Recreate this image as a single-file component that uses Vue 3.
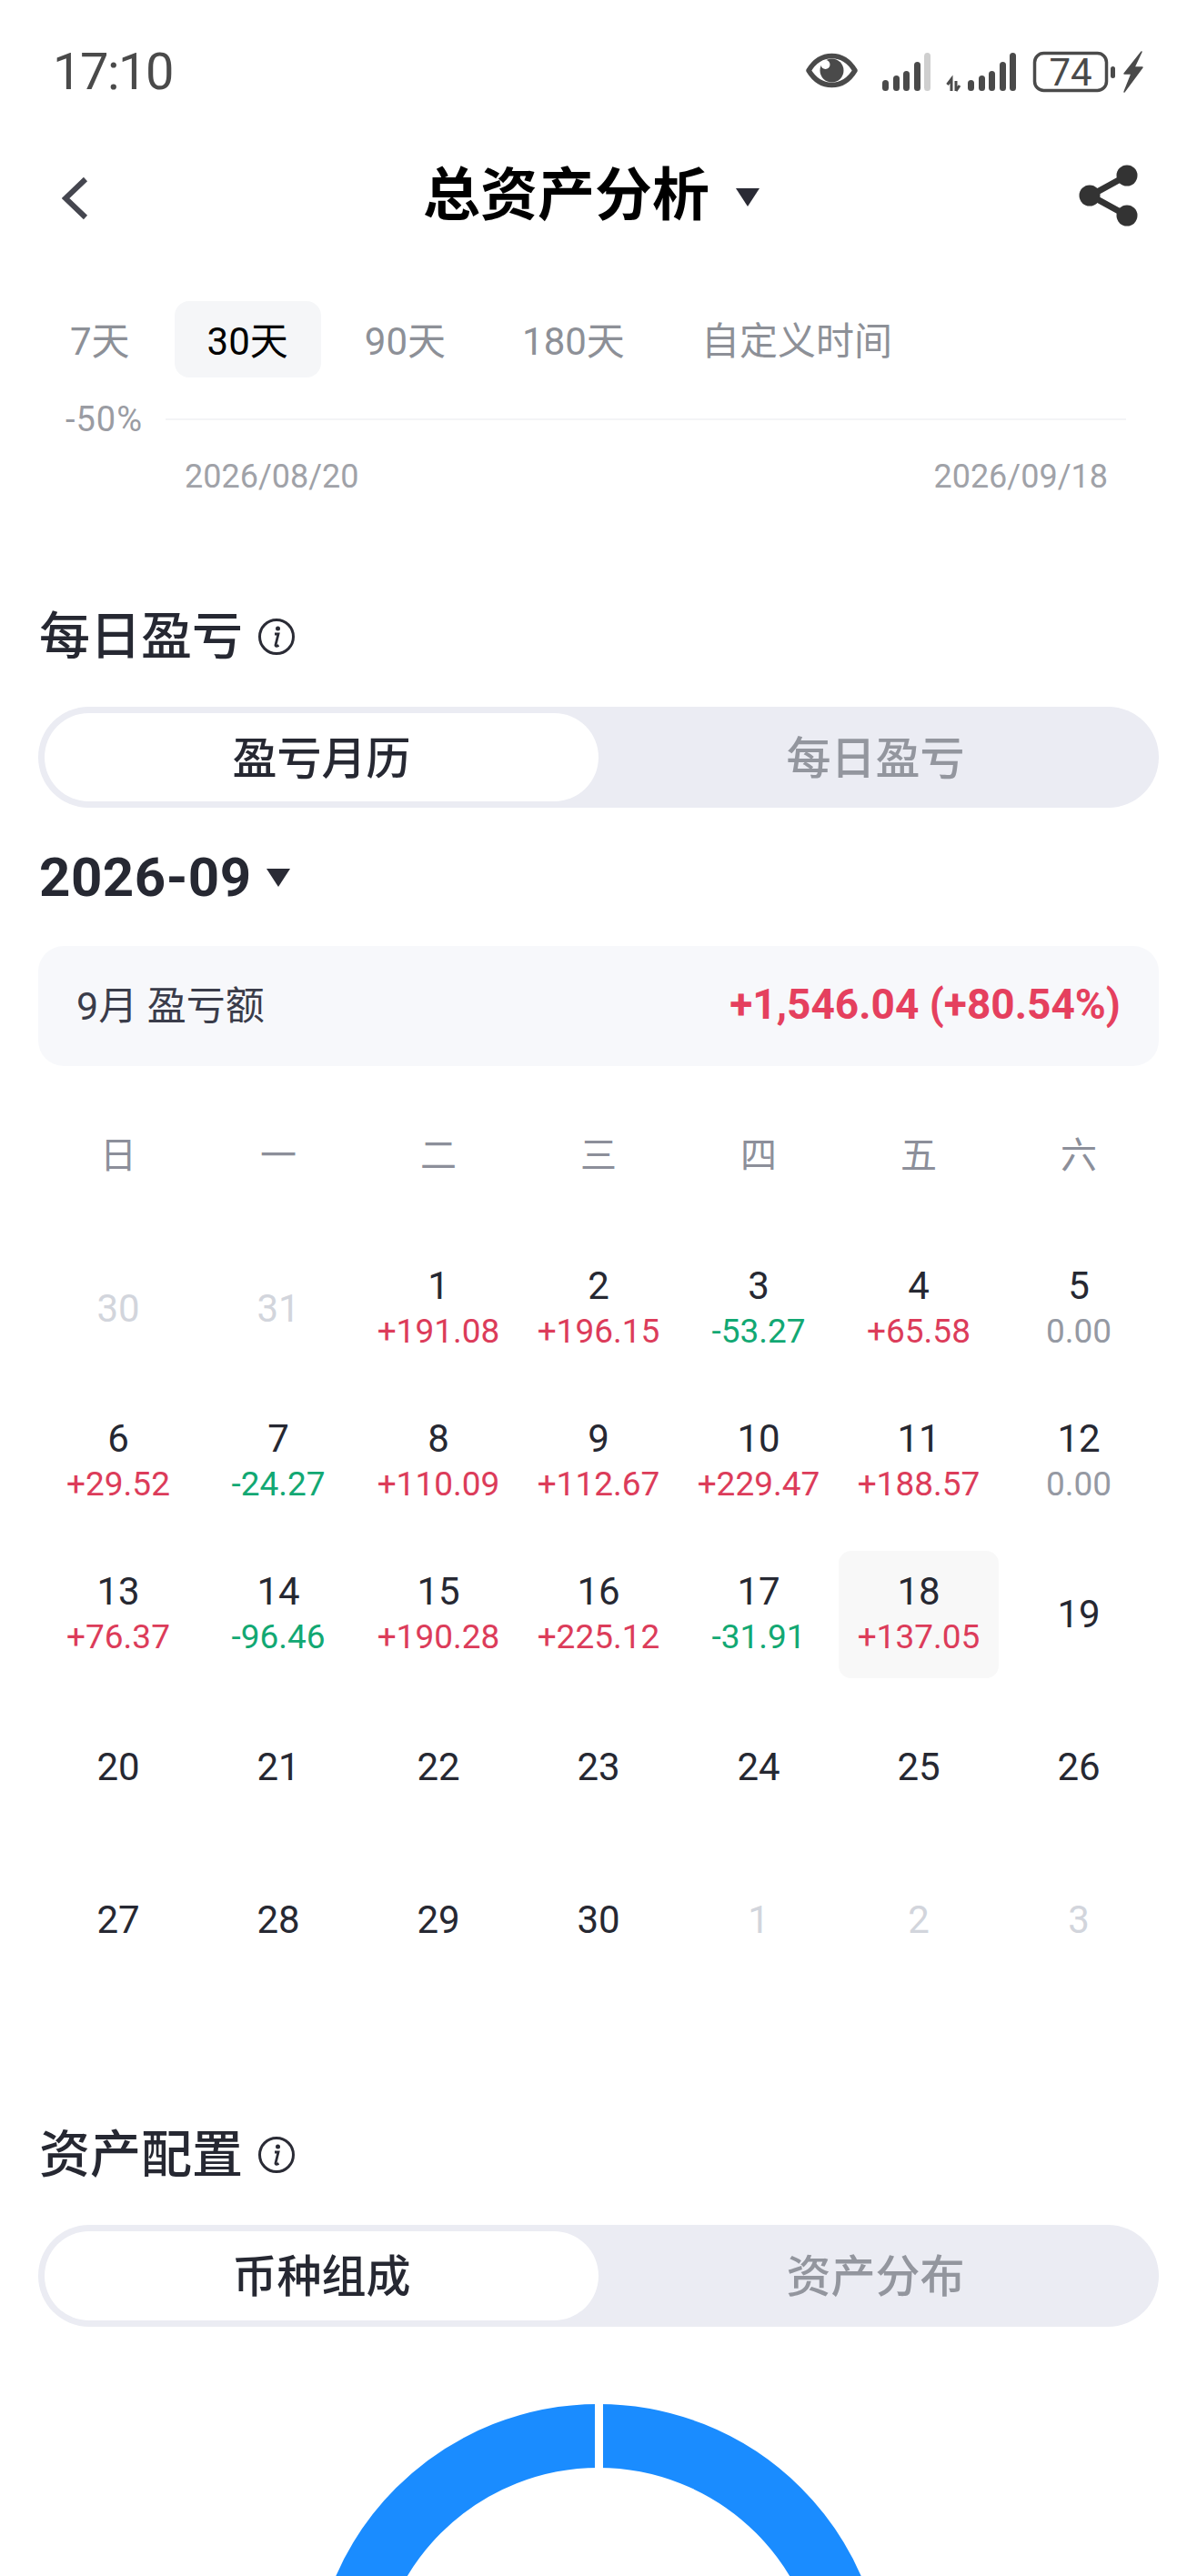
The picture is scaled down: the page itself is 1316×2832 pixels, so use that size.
<template>
  <div class="page">
    <div class="status">
      <span class="time">17:10</span>
      <svg class="status-icons" width="372" height="64" viewBox="0 -9 372 64">
        <path d="M3 21.5C10 10 19 5.5 28.5 5.5S47 10 54 21.5C47 33 38 37.5 28.5 37.5S10 33 3 21.5Z" fill="none" stroke="#4a4a4a" stroke-width="5.5" stroke-linejoin="round" />
        <circle cx="28.5" cy="21.5" r="13" fill="#4a4a4a" />
        <circle cx="21.5" cy="15" r="5" fill="#fff" />
        <rect v-for="b in signalOne" :key="b.x" :x="b.x" :y="44 - b.h" width="7" :height="b.h" rx="3.5" :fill="b.light ? '#cfcfcf' : '#4a4a4a'" />
        <path d="M160 44V31l-4.5 6M165 44V33M165 44l4-6" fill="none" stroke="#4a4a4a" stroke-width="3" />
        <rect v-for="x in signalTwo" :key="x.x" :x="x.x" :y="44 - x.h" width="7" :height="x.h" rx="3.5" fill="#4a4a4a" />
        <rect x="251.5" y="2.5" width="79" height="41" rx="10" fill="none" stroke="#4a4a4a" stroke-width="3.5" />
        <text x="291" y="38" text-anchor="middle" class="battery-num">74</text>
        <rect x="335" y="17" width="5" height="13" rx="2.5" fill="#4a4a4a" />
        <path d="M369 1L350 25h8l-8 20 20-27h-9z" fill="#4a4a4a" stroke="#4a4a4a" stroke-width="1.5" stroke-linejoin="round" />
      </svg>
    </div>

    <div class="nav">
      <svg class="back" width="30" height="48" viewBox="0 0 30 48">
        <path d="M26 3L4 24l22 21" fill="none" stroke="#45464f" stroke-width="6" />
      </svg>
      <div class="title">
        <span>总资产分析</span>
        <i class="caret caret-nav"></i>
      </div>
      <svg class="share" width="66" height="68" viewBox="0 0 66 68">
        <path d="M53 12L13 34l40 22" fill="none" stroke="#333" stroke-width="7" />
        <circle cx="53" cy="12" r="11.5" fill="#333" />
        <circle cx="12" cy="34" r="11.5" fill="#333" />
        <circle cx="53" cy="56" r="11.5" fill="#333" />
      </svg>
    </div>

    <div class="ranges">
      <span v-for="r in ranges" :key="r" :class="['range', { active: r === '30天' }]">{{ r }}</span>
    </div>

    <div class="axis">
      <span class="axis-label">-50%</span>
      <div class="axis-line"></div>
    </div>
    <div class="dates">
      <span>2026/08/20</span>
      <span>2026/09/18</span>
    </div>

    <div class="section-head first">
      <span>每日盈亏</span>
      <svg class="info" width="42" height="42" viewBox="0 0 42 42">
        <circle cx="21" cy="21" r="18.5" fill="none" stroke="#2a2b35" stroke-width="3" />
        <circle cx="22.5" cy="12" r="2.5" fill="#2a2b35" />
        <path d="M19 18h4l-3 12c-.3 1.5 1 1.8 3.5.5" fill="none" stroke="#2a2b35" stroke-width="2.8" />
      </svg>
    </div>
    <div class="segment">
      <div class="seg-item on">盈亏月历</div>
      <div class="seg-item">每日盈亏</div>
    </div>

    <div class="month">
      <span>2026-09</span>
      <i class="caret caret-month"></i>
    </div>

    <div class="summary">
      <span class="summary-label">9月 盈亏额</span>
      <span class="summary-value">+1,546.04 (+80.54%)</span>
    </div>

    <div class="weekdays">
      <span v-for="w in weekdays" :key="w">{{ w }}</span>
    </div>

    <div class="calendar">
      <div
        v-for="(c, i) in cells"
        :key="i"
        :class="['cell', { muted: c.muted, today: c.day === 18 && !c.muted }]"
      >
        <span class="day">{{ c.day }}</span>
        <span v-if="c.val" :class="['val', tone(c.val)]">{{ c.val }}</span>
      </div>
    </div>

    <div class="section-head second">
      <span>资产配置</span>
      <svg class="info" width="42" height="42" viewBox="0 0 42 42">
        <circle cx="21" cy="21" r="18.5" fill="none" stroke="#2a2b35" stroke-width="3" />
        <circle cx="22.5" cy="12" r="2.5" fill="#2a2b35" />
        <path d="M19 18h4l-3 12c-.3 1.5 1 1.8 3.5.5" fill="none" stroke="#2a2b35" stroke-width="2.8" />
      </svg>
    </div>
    <div class="segment tall">
      <div class="seg-item on">币种组成</div>
      <div class="seg-item">资产分布</div>
    </div>

    <svg class="donut" width="640" height="190" viewBox="0 0 640 190">
      <circle cx="320" cy="315" r="280" fill="none" stroke="#1a8cff" stroke-width="70" />
      <rect x="316" y="0" width="9" height="72" fill="#fff" />
    </svg>
  </div>
</template>

<script setup>
const ranges = ['7天', '30天', '90天', '180天', '自定义时间']
const weekdays = ['日', '一', '二', '三', '四', '五', '六']

const signalOne = [
  { x: 84, h: 12 },
  { x: 96, h: 17 },
  { x: 107, h: 22 },
  { x: 119, h: 32 },
  { x: 130, h: 42, light: true }
]
const signalTwo = [
  { x: 178, h: 12 },
  { x: 190, h: 17 },
  { x: 201, h: 22 },
  { x: 213, h: 32 },
  { x: 224, h: 42 }
]

const values = {
  1: '+191.08', 2: '+196.15', 3: '-53.27', 4: '+65.58', 5: '0.00',
  6: '+29.52', 7: '-24.27', 8: '+110.09', 9: '+112.67', 10: '+229.47', 11: '+188.57', 12: '0.00',
  13: '+76.37', 14: '-96.46', 15: '+190.28', 16: '+225.12', 17: '-31.91', 18: '+137.05'
}

const cells = [
  { day: 30, muted: true },
  { day: 31, muted: true },
  ...Array.from({ length: 30 }, (_, i) => ({ day: i + 1, val: values[i + 1] })),
  { day: 1, muted: true },
  { day: 2, muted: true },
  { day: 3, muted: true }
]

const tone = (v) => {
  if (v[0] === '+') return 'up'
  if (v[0] === '-') return 'down'
  return 'flat'
}
</script>

<style>
html,
body {
  margin: 0;
  background: #fff;
}
</style>

<style scoped>
.page {
  width: 1316px;
  height: 2832px;
  overflow: hidden;
  background: #fff;
  font-family: Roboto, "Noto Sans CJK SC", sans-serif;
  color: #262832;
}

.status {
  height: 158px;
  display: flex;
  align-items: center;
  justify-content: space-between;
  padding: 0 58px 0 58px;
  box-sizing: border-box;
}

.time {
  font-size: 56px;
  letter-spacing: -1.5px;
  color: #4a4a4a;
}

.status-icons {
  display: block;
}

.battery-num {
  font-family: Roboto, sans-serif;
  font-size: 42px;
  fill: #4a4a4a;
}

.nav {
  height: 112px;
  position: relative;
  display: flex;
  align-items: center;
  justify-content: space-between;
  padding: 0 64px 0 68px;
}

.back {
  margin-top: 8px;
}

.share {
  margin-top: 2px;
}

.title {
  position: absolute;
  left: 465px;
  display: flex;
  align-items: center;
  font-size: 63px;
  font-weight: 700;
  color: #000;
  line-height: 1;
}

.caret {
  display: block;
  width: 0;
  height: 0;
  border-left: 13px solid transparent;
  border-right: 13px solid transparent;
  border-top: 20px solid #2a2b35;
}

.caret-nav {
  margin-left: 29px;
  margin-top: 6px;
}

.ranges {
  margin-top: 61px;
  height: 84px;
  display: flex;
  align-items: center;
  padding-left: 42px;
}

.range {
  height: 84px;
  line-height: 90px;
  padding: 0 42px;
  font-size: 42px;
  color: #8d9097;
  border-radius: 16px;
}

.range:first-child {
  padding-left: 35px;
  padding-right: 49px;
}

.range.active {
  padding: 0 36px;
  margin-right: 6px;
  color: #000;
  background: #f5f6f8;
}

.axis {
  height: 92px;
  display: flex;
  align-items: center;
  padding-left: 72px;
}

.axis-label {
  width: 110px;
  font-size: 38px;
  letter-spacing: 1px;
  color: #9a9ca3;
}

.axis-line {
  width: 1056px;
  height: 2px;
  background: #f3f4f6;
}

.dates {
  height: 34px;
  line-height: 34px;
  display: flex;
  justify-content: space-between;
  padding: 0 98px 0 203px;
  font-size: 36px;
  color: #a0a2a8;
}

.section-head {
  height: 56px;
  display: flex;
  align-items: center;
  padding-left: 43px;
  font-size: 56px;
  font-weight: 500;
  line-height: 1;
}

.section-head.first {
  margin-top: 131px;
}

.section-head.second {
  margin-top: 160px;
}

.info {
  margin-left: 16px;
}

.segment {
  margin: 49px 42px 0;
  height: 111px;
  box-sizing: border-box;
  padding: 7px;
  display: flex;
  border-radius: 56px;
  background: #ebecf3;
}

.segment.tall {
  height: 112px;
}

.seg-item {
  flex: 1;
  display: flex;
  align-items: center;
  justify-content: center;
  padding-bottom: 7px;
  font-size: 49px;
  font-weight: 500;
  color: #93969e;
  border-radius: 50px;
}

.seg-item.on {
  flex: 0 0 609px;
  background: #fff;
  color: #262832;
}

.month {
  margin-top: 46px;
  height: 60px;
  display: flex;
  align-items: center;
  padding-left: 43px;
  font-size: 60px;
  letter-spacing: 0.5px;
  font-weight: 700;
}

.caret-month {
  margin-left: 16px;
  margin-top: 2px;
}

.summary {
  margin: 46px 42px 0;
  height: 132px;
  padding: 0 42px 5px;
  box-sizing: border-box;
  display: flex;
  align-items: center;
  justify-content: space-between;
  background: #f7f8fb;
  border-radius: 28px;
}

.summary-label {
  font-size: 43px;
  margin-bottom: 4px;
  color: #3a3c4a;
}

.summary-value {
  font-size: 46px;
  font-weight: 700;
  color: #e5405e;
}

.weekdays {
  margin: 66px 42px 0;
  height: 40px;
  display: grid;
  grid-template-columns: repeat(7, 176px);
  justify-items: center;
  align-items: center;
  font-size: 40px;
  color: #8c8f9a;
}

.calendar {
  margin: 91px 42px 0;
  display: grid;
  grid-template-columns: repeat(7, 176px);
  grid-auto-rows: 140px;
  row-gap: 28px;
}

.cell {
  display: flex;
  flex-direction: column;
  align-items: center;
  justify-content: center;
  border-radius: 14px;
}

.cell.today {
  background: #f8f8f8;
}

.day {
  font-size: 42px;
  line-height: 48px;
  color: #262832;
}

.cell.muted .day {
  color: #d2d5dc;
}

.val {
  font-size: 37px;
  line-height: 40px;
  margin-top: 6px;
  margin-bottom: 4px;
}

.val.up {
  color: #dc3c5a;
}

.val.down {
  color: #12a873;
}

.val.flat {
  color: #9599a3;
}

.donut {
  display: block;
  margin: 85px auto 0;
}
</style>
